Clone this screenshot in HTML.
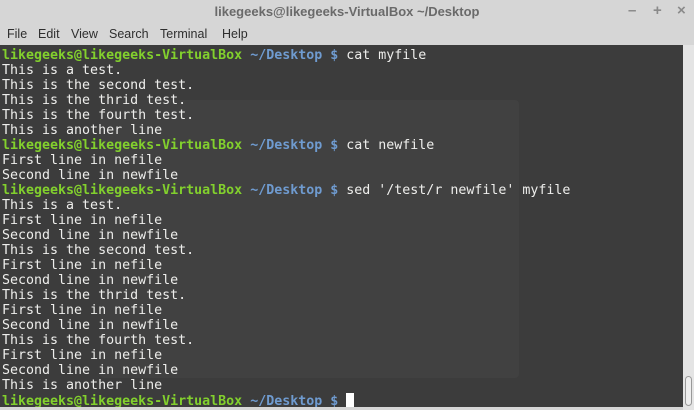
<!DOCTYPE html>
<html><head><meta charset="utf-8"><style>
*{margin:0;padding:0;box-sizing:border-box}
body{width:694px;height:410px;overflow:hidden;background:#d6d6d6;font-family:"Liberation Sans","DejaVu Sans",sans-serif;position:relative}
.title{position:absolute;left:0;top:0;width:694px;height:23px;background:#d6d6d6;text-align:center;font-weight:bold;font-size:13px;color:#6a6a6a;line-height:23px}
.ctl{position:absolute;top:0;line-height:21px;color:#8a8a8a;font-size:15px;font-weight:bold}
.menu{position:absolute;left:0;top:23px;width:694px;height:22px;background:#d6d6d6;font-size:12.5px;color:#2e2e2e;line-height:22px}
.menu span{position:absolute}
.term{position:absolute;left:0;top:45px;width:683px;height:362px;background:#3c3c3c;overflow:hidden}
.ghost{position:absolute;left:100px;top:55px;width:419px;height:278px;background:#414141;border-radius:4px}
pre{position:absolute;left:2px;top:3px;font-family:"DejaVu Sans Mono",monospace;font-size:13.3px;line-height:15px;color:#eeeeec}
.g{color:#82d02d;font-weight:bold}.b{color:#6f9bd0;font-weight:bold}
.cur{display:inline-block;width:8px;height:14px;background:#fff;vertical-align:-2px}
.sb{position:absolute;left:683px;top:45px;width:11px;height:365px;background:#e4e4e4}
.thumb{position:absolute;left:685px;top:376px;width:7px;height:30px;border:1px solid #999;border-radius:4px;background:#eee}
.bot{position:absolute;left:0;top:407px;width:683px;height:3px;background:#d6d6d6}
</style></head><body>
<div class="title">likegeeks@likegeeks-VirtualBox ~/Desktop</div>
<div class="ctl" style="left:628px">–</div>
<div class="ctl" style="left:653px">+</div>
<div class="ctl" style="left:677px">×</div>
<div class="menu"><span style="left:7px">File</span><span style="left:38px">Edit</span><span style="left:71px">View</span><span style="left:109px">Search</span><span style="left:160px">Terminal</span><span style="left:222px">Help</span></div>
<div class="term"><div class="ghost"></div>
<pre><span class="g">likegeeks@likegeeks-VirtualBox</span> <span class="b">~/Desktop $</span> cat myfile
This is a test.
This is the second test.
This is the thrid test.
This is the fourth test.
This is another line
<span class="g">likegeeks@likegeeks-VirtualBox</span> <span class="b">~/Desktop $</span> cat newfile
First line in nefile
Second line in newfile
<span class="g">likegeeks@likegeeks-VirtualBox</span> <span class="b">~/Desktop $</span> sed '/test/r newfile' myfile
This is a test.
First line in nefile
Second line in newfile
This is the second test.
First line in nefile
Second line in newfile
This is the thrid test.
First line in nefile
Second line in newfile
This is the fourth test.
First line in nefile
Second line in newfile
This is another line
<span class="g">likegeeks@likegeeks-VirtualBox</span> <span class="b">~/Desktop $</span> <span class="cur"></span></pre></div>
<div class="sb"></div><div class="thumb"></div><div class="bot"></div>
</body></html>
